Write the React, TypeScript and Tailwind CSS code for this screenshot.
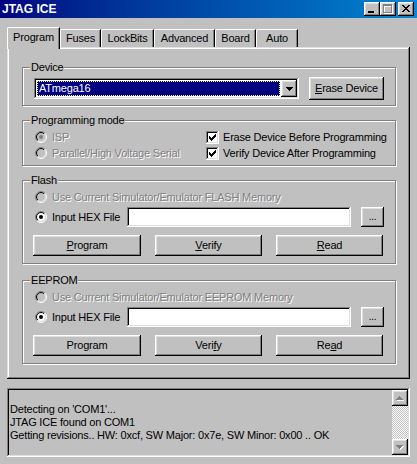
import React from 'react';

const raised =
  'bg-[#c0c0c0] shadow-[inset_-1px_-1px_#000,inset_1px_1px_#fff,inset_-2px_-2px_#808080,inset_2px_2px_#dfdfdf]';
const sunken =
  'shadow-[inset_-1px_-1px_#fff,inset_1px_1px_#808080,inset_-2px_-2px_#dfdfdf,inset_2px_2px_#000]';
const disabledText = 'text-[#808080] [text-shadow:1px_1px_0_#fff]';

function Radio({ checked, disabled }: { checked?: boolean; disabled?: boolean }) {
  return (
    <svg width="12" height="12" viewBox="0 0 12 12" className="shrink-0">
      <defs>
        <linearGradient id="radio-outer" x1="0" y1="0" x2="1" y2="1">
          <stop offset="0.5" stopColor="#808080" />
          <stop offset="0.5" stopColor="#ffffff" />
        </linearGradient>
        <linearGradient id="radio-inner" x1="0" y1="0" x2="1" y2="1">
          <stop offset="0.5" stopColor="#000000" />
          <stop offset="0.5" stopColor="#dfdfdf" />
        </linearGradient>
      </defs>
      <circle cx="6" cy="6" r="5.5" fill="none" stroke="url(#radio-outer)" />
      <circle cx="6" cy="6" r="4.5" fill={disabled ? '#c0c0c0' : '#ffffff'} stroke="url(#radio-inner)" />
      {checked && <circle cx="6" cy="6" r="2" fill={disabled ? '#808080' : '#000000'} />}
    </svg>
  );
}

function Checkbox() {
  return (
    <div className={`w-[13px] h-[13px] bg-white shrink-0 ${sunken}`}>
      <svg width="13" height="13" viewBox="0 0 13 13" shapeRendering="crispEdges">
        <path
          d="M9 3h1v1h-1z M8 4h2v1h-2z M3 5h1v1h-1z M7 5h3v1h-3z M3 6h2v1h-2z M6 6h3v1h-3z M3 7h5v1h-5z M4 8h3v1h-3z M5 9h1v1h-1z"
          fill="#000"
        />
      </svg>
    </div>
  );
}

function Group({ label, className, children }: { label: string; className: string; children: React.ReactNode }) {
  return (
    <div className={`relative w-[374px] border border-[#808080] shadow-[inset_1px_1px_#fff,1px_1px_#fff] ${className}`}>
      <span className="absolute left-[7px] -top-[7px] bg-[#c0c0c0] px-[1px] leading-[13px]">{label}</span>
      {children}
    </div>
  );
}

function Button({ className, children }: { className: string; children: React.ReactNode }) {
  return <div className={`${raised} flex items-center justify-center leading-[13px] ${className}`}>{children}</div>;
}

function FileSection({ memory, labels }: { memory: string; labels: React.ReactNode[] }) {
  return (
    <div className="pt-[8px] pl-[12px]">
      <div className="flex items-center h-[16px] gap-[5px]">
        <Radio disabled />
        <span className={disabledText}>Use Current Simulator/Emulator {memory} Memory</span>
      </div>
      <div className="flex items-center mt-[2px] h-[20px]">
        <div className="w-[92px] flex items-center gap-[5px]">
          <Radio checked />
          <span>Input HEX File</span>
        </div>
        <div className={`w-[224px] h-[20px] bg-white ${sunken}`} />
        <Button className="ml-[10px] w-[23px] h-[20px] text-[10px] pb-[2px]">...</Button>
      </div>
      <div className="flex mt-[8px] -ml-[2px] gap-[14px]">
        <Button className="w-[108px] h-[21px]">{labels[0]}</Button>
        <Button className="w-[107px] h-[21px]">{labels[1]}</Button>
        <Button className="w-[107px] h-[21px]">{labels[2]}</Button>
      </div>
    </div>
  );
}

function ScrollArrow({ up }: { up?: boolean }) {
  const d = up
    ? 'M7 6h1v1H7z M6 7h3v1H6z M5 8h5v1H5z M4 9h7v1H4z'
    : 'M4 6h7v1H4z M5 7h5v1H5z M6 8h3v1H6z M7 9h1v1H7z';
  return (
    <div className={`w-[16px] h-[16px] ${raised}`}>
      <svg width="16" height="16" viewBox="0 0 16 16" shapeRendering="crispEdges">
        <path d={d} fill="#fff" transform="translate(1 1)" />
        <path d={d} fill="#808080" />
      </svg>
    </div>
  );
}

export default function App() {
  const tabs = [
    { name: 'Fuses', w: 'w-[41px]' },
    { name: 'LockBits', w: 'w-[53px]' },
    { name: 'Advanced', w: 'w-[61px]' },
    { name: 'Board', w: 'w-[41px]' },
    { name: 'Auto', w: 'w-[42px]' },
  ];

  return (
    <div className="w-[417px] h-[464px] bg-[#c0c0c0] text-[11px] tracking-[-0.2px] text-black font-['Liberation_Sans',Arial,sans-serif] overflow-hidden">
      {/* title bar */}
      <div className="h-[18px] flex items-center justify-between bg-gradient-to-r from-[#000080] to-[#1084d0]">
        <span className="pl-[2px] text-white font-bold text-[12px] tracking-normal leading-[14px]">JTAG ICE</span>
        <div className="flex items-center mr-[3px]">
          <div className={`w-[16px] h-[14px] ${raised}`}>
            <svg width="16" height="14" viewBox="0 0 16 14" shapeRendering="crispEdges">
              <path d="M4 9h6v2H4z" fill="#000" />
            </svg>
          </div>
          <div className={`w-[16px] h-[14px] ${raised}`}>
            <svg width="16" height="14" viewBox="0 0 16 14" shapeRendering="crispEdges">
              <path d="M4 3h9v9H4z M5 5v6h7V5z" fill="#fff" fillRule="evenodd" />
              <path d="M3 2h9v9H3z M4 4v6h7V4z" fill="#808080" fillRule="evenodd" />
            </svg>
          </div>
          <div className={`ml-[2px] w-[16px] h-[14px] ${raised}`}>
            <svg width="16" height="14" viewBox="0 0 16 14" shapeRendering="crispEdges">
              <path
                d="M4 3h2v1h-2z M10 3h2v1h-2z M5 4h2v1h-2z M9 4h2v1h-2z M6 5h4v1h-4z M7 6h2v1h-2z M6 7h4v1h-4z M5 8h2v1h-2z M9 8h2v1h-2z M4 9h2v1h-2z M10 9h2v1h-2z"
                fill="#000"
              />
            </svg>
          </div>
        </div>
      </div>

      {/* tabs */}
      <div className="flex items-end h-[20px] mt-[9px] ml-[7px]">
        <div className="relative z-10 w-[53px] h-[22px] -mb-[2px] bg-[#c0c0c0] border-l border-t border-white rounded-tl-[2px] border-r border-r-black shadow-[inset_-1px_0_#808080] flex justify-center pt-[3px] leading-[13px]">
          Program
        </div>
        {tabs.map((t) => (
          <div
            key={t.name}
            className={`${t.w} h-[18px] bg-[#c0c0c0] border-l border-t border-white rounded-tl-[2px] border-r border-r-black shadow-[inset_-1px_0_#808080] flex justify-center pt-[2px] leading-[13px]`}
          >
            {t.name}
          </div>
        ))}
      </div>

      {/* tab panel */}
      <div className="ml-[7px] w-[403px] h-[332px] bg-[#c0c0c0] shadow-[inset_-1px_-1px_#000,inset_1px_1px_#dfdfdf,inset_-2px_-2px_#808080,inset_2px_2px_#fff] pl-[15px] pt-[20px]">
        <Group label="Device" className="h-[39px]">
          <div className="flex pl-[11px] pt-[10px]">
            <div className={`w-[265px] h-[21px] bg-white p-[2px] flex ${sunken}`}>
              <div className="flex-1 m-[1px] bg-[#000080] text-white outline outline-1 outline-dotted outline-[#ffff80] -outline-offset-1 leading-[14px] pl-[2px]">
                ATmega16
              </div>
              <div className={`w-[16px] h-[17px] flex items-center justify-center ${raised}`}>
                <svg width="7" height="4" viewBox="0 0 7 4" shapeRendering="crispEdges">
                  <path d="M0 0h7v1H0z M1 1h5v1H1z M2 2h3v1H2z M3 3h1v1H3z" fill="#000" />
                </svg>
              </div>
            </div>
            <Button className="ml-[10px] -mt-[1px] w-[75px] h-[23px]">
              <span>
                <u>E</u>rase Device
              </span>
            </Button>
          </div>
        </Group>

        <Group label="Programming mode" className="mt-[14px] h-[46px]">
          <div className="flex pt-[8px] pl-[12px]">
            <div className="w-[171px]">
              <div className="flex items-center h-[16px] gap-[5px]">
                <Radio checked disabled />
                <span className={disabledText}>ISP</span>
              </div>
              <div className="flex items-center h-[16px] gap-[5px]">
                <Radio disabled />
                <span className={disabledText}>Parallel/High Voltage Serial</span>
              </div>
            </div>
            <div>
              <div className="flex items-center h-[16px] gap-[4px]">
                <Checkbox />
                <span>Erase Device Before Programming</span>
              </div>
              <div className="flex items-center h-[16px] gap-[4px]">
                <Checkbox />
                <span>Verify Device After Programming</span>
              </div>
            </div>
          </div>
        </Group>

        <Group label="Flash" className="mt-[14px] h-[84px]">
          <FileSection
            memory="FLASH"
            labels={[
              <span key="p"><u>P</u>rogram</span>,
              <span key="v"><u>V</u>erify</span>,
              <span key="r"><u>R</u>ead</span>,
            ]}
          />
        </Group>

        <Group label="EEPROM" className="mt-[16px] h-[84px]">
          <FileSection
            memory="EEPROM"
            labels={[
              <span key="p">Pro<u>g</u>ram</span>,
              <span key="v">Veri<u>f</u>y</span>,
              <span key="r">Re<u>a</u>d</span>,
            ]}
          />
        </Group>
      </div>

      {/* log */}
      <div className={`ml-[7px] mt-[9px] w-[403px] h-[69px] p-[2px] flex ${sunken}`}>
        <div className="flex-1 pt-[13px] pl-[1px] leading-[13px] whitespace-nowrap overflow-hidden">
          <div>Detecting on 'COM1'...</div>
          <div>JTAG ICE found on COM1</div>
          <div>Getting revisions.. HW: 0xcf, SW Major: 0x7e, SW Minor: 0x00 .. OK</div>
        </div>
        <div className="w-[16px] flex flex-col">
          <ScrollArrow up />
          <div className="flex-1 bg-[image:repeating-conic-gradient(#fff_0_25%,#c0c0c0_0_50%)] bg-[length:2px_2px]" />
          <ScrollArrow />
        </div>
      </div>
    </div>
  );
}
